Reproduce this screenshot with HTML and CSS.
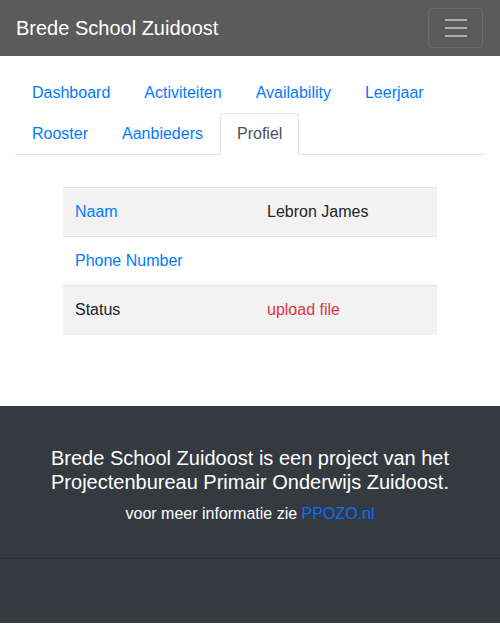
FILE: index.html
```html
<!DOCTYPE html>
<html lang="nl">
<head>
<meta charset="utf-8">
<title>Brede School Zuidoost</title>
<link rel="stylesheet" href="styles.css">
</head>
<body>
<nav class="navbar">
  <a class="brand" href="#">Brede School Zuidoost</a>
  <button class="toggler" type="button" aria-label="Menu">
    <svg width="30" height="30" viewBox="0 0 30 30"><path stroke="rgba(255,255,255,0.5)" stroke-width="2" stroke-linecap="butt" d="M4 7h22M4 15h22M4 23h22"/></svg>
  </button>
</nav>
<main class="container">
  <ul class="tabs">
    <li><a class="tab" href="#">Dashboard</a></li>
    <li><a class="tab" href="#">Activiteiten</a></li>
    <li><a class="tab" href="#">Availability</a></li>
    <li><a class="tab" href="#">Leerjaar</a></li>
    <li><a class="tab" href="#">Rooster</a></li>
    <li><a class="tab" href="#">Aanbieders</a></li>
    <li><a class="tab active" href="#">Profiel</a></li>
  </ul>
  <div class="table-wrap">
    <table class="profile">
      <tbody>
        <tr class="odd"><td class="key"><a href="#">Naam</a></td><td>Lebron James</td></tr>
        <tr><td class="key"><a href="#">Phone Number</a></td><td></td></tr>
        <tr class="odd"><td class="key">Status</td><td><span class="danger">upload file</span></td></tr>
      </tbody>
    </table>
  </div>
</main>
<footer class="footer">
  <div class="footer-top">
    <h5 class="footer-title">Brede School Zuidoost is een project van het Projectenbureau Primair Onderwijs Zuidoost.</h5>
    <p class="footer-info">voor meer informatie zie <a href="#">PPOZO.nl</a></p>
  </div>
  <div class="footer-bottom"></div>
</footer>
</body>
</html>
```
FILE: styles.css
```css
* { box-sizing: border-box; }
html, body { margin: 0; padding: 0; }
body {
  font-family: "Liberation Sans", Arial, sans-serif;
  font-size: 16px;
  line-height: 24px;
  color: #212529;
  background: #fff;
  padding-bottom: 15px;
}
a { color: #007bff; text-decoration: none; }

.navbar {
  height: 56px;
  background: #5b5b5b;
  display: flex;
  align-items: center;
  justify-content: space-between;
  padding: 0 17px 0 16px;
}
.brand {
  color: #fff;
  font-size: 20px;
  line-height: 30px;
}
.toggler {
  width: 55px;
  height: 40px;
  padding: 0;
  background: transparent;
  border: 1px solid rgba(255,255,255,0.1);
  border-radius: 4px;
  display: flex;
  align-items: center;
  justify-content: center;
}
.toggler svg { display: block; }

.container {
  padding: 16px 15px 0;
}
.tabs {
  list-style: none;
  margin: 0;
  padding: 0;
  display: flex;
  flex-wrap: wrap;
  border-bottom: 1px solid #dee2e6;
}
.tabs li { margin-bottom: -1px; }
.tab {
  display: block;
  padding: 8px 16px;
  border: 1px solid transparent;
  border-top-left-radius: 4px;
  border-top-right-radius: 4px;
  color: #007bff;
}
.tab.active {
  color: #495057;
  background: #fff;
  border-color: #dee2e6 #dee2e6 #fff;
}

.table-wrap {
  padding: 32px 48px 0;
}
.profile {
  width: 100%;
  border-collapse: collapse;
  margin-bottom: 71px;
}
.profile td {
  padding: 12px;
  border-top: 1px solid #dee2e6;
  vertical-align: top;
  height: 49px;
}
.profile td.key { width: 192px; }
.profile tr.odd { background: #f2f2f2; }
.danger { color: #dc3545; }

.footer {
  background: #343a40;
  color: #fff;
  text-align: center;
}
.footer-top {
  padding: 40px 40px 32px;
  border-bottom: 1px solid #2c3034;
}
.footer-title {
  margin: 0 0 8px;
  font-size: 20px;
  line-height: 24px;
  font-weight: normal;
}
.footer-info {
  margin: 0;
  font-size: 16px;
  line-height: 24px;
}
.footer-info a { color: #0d6efd; }
.footer-bottom {
  height: 64px;
}
```
